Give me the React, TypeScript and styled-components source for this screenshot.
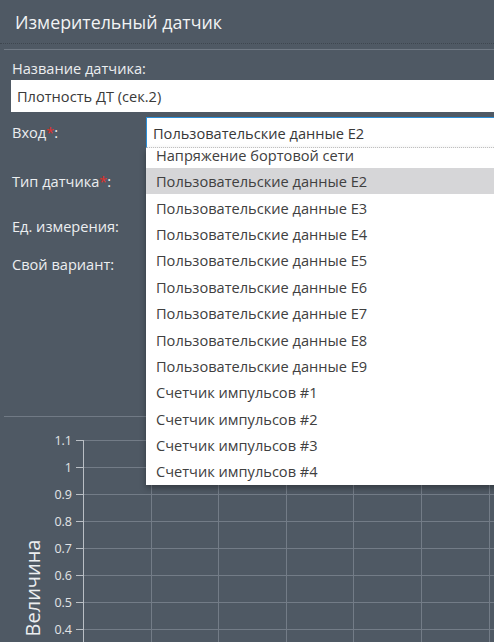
import React from "react";
import styled, { createGlobalStyle } from "styled-components";

const Global = createGlobalStyle`
  html, body { margin: 0; padding: 0; background: #4f5964; overflow: hidden; }
  body { font-family: "Open Sans", "Noto Sans", sans-serif; }
  * { box-sizing: border-box; }
`;

const Page = styled.div`
  width: 494px;
  height: 642px;
  overflow: hidden;
  background: #4f5964;
  color: #e8eaec;
`;

const Header = styled.div`
  height: 44px;
  padding-left: 15px;
  display: flex;
  align-items: center;
  font-size: 17.8px;
  color: #f2f3f4;
  border-bottom: 1px dotted #3e464f;
`;

const Divider = styled.div<{ $mt: number }>`
  margin: ${(p) => p.$mt}px 0 0 4px;
  height: 1px;
  background: #717a85;
`;

const Form = styled.div`
  padding-left: 11px;
`;

const Label = styled.div`
  font-size: 14.6px;
  line-height: 19px;
  color: #eceef0;
  padding-left: 1px;
  white-space: nowrap;
`;

const Required = styled.span`
  color: #e0302a;
`;

const NameLabel = styled(Label)`
  margin-top: 9px;
`;

const TextInput = styled.div`
  margin-top: 2px;
  height: 32px;
  background: #fff;
  color: #3a3a3a;
  font-size: 14.6px;
  display: flex;
  align-items: center;
  padding-left: 6px;
`;

const Rows = styled.div`
  margin-top: 5px;
  display: flex;
  flex-direction: column;
`;

const Row = styled.div<{ $h: number }>`
  height: ${(p) => p.$h}px;
  display: grid;
  grid-template-columns: 135px 1fr;
  align-items: center;
`;

const SelectWrap = styled.div`
  position: relative;
  height: 31px;
  align-self: start;
`;

const SelectBox = styled.div`
  height: 31px;
  width: 360px;
  background: #fff;
  border-top: 1px solid #2b8fd8;
  border-left: 1px solid #2b8fd8;
  border-bottom: 1px dotted #c9c9c9;
  color: #383838;
  font-size: 14.6px;
  display: flex;
  align-items: center;
  padding-left: 6px;
  white-space: nowrap;
`;

const Dropdown = styled.div`
  position: absolute;
  top: 31px;
  left: 0;
  width: 360px;
  height: 337px;
  background: #fff;
  overflow: hidden;
  box-shadow: 0 3px 6px rgba(0, 0, 0, 0.35);
  z-index: 5;
`;

const List = styled.div`
  margin-top: -6.4px;
`;

const Item = styled.div<{ $active?: boolean }>`
  height: 26.4px;
  display: flex;
  align-items: center;
  padding-left: 10px;
  font-size: 14.6px;
  color: #404040;
  white-space: nowrap;
  background: ${(p) => (p.$active ? "#d6d6d8" : "#fff")};
`;

const ChartBox = styled.div`
  margin-top: 0;
`;

const items = [
  "Напряжение бортовой сети",
  "Пользовательские данные E2",
  "Пользовательские данные E3",
  "Пользовательские данные E4",
  "Пользовательские данные E5",
  "Пользовательские данные E6",
  "Пользовательские данные E7",
  "Пользовательские данные E8",
  "Пользовательские данные E9",
  "Счетчик импульсов #1",
  "Счетчик импульсов #2",
  "Счетчик импульсов #3",
  "Счетчик импульсов #4",
];

const ticks = ["1.1", "1", "0.9", "0.8", "0.7", "0.6", "0.5", "0.4", "0.3"];

function Chart() {
  const top = 23;
  const step = 27;
  const axisX = 83;
  const vStep = 67.6;
  return (
    <svg width={494} height={230} style={{ display: "block" }}>
      {ticks.map((t, i) => {
        const y = top + i * step + 0.5;
        return (
          <g key={t}>
            <line x1={axisX} x2={494} y1={y} y2={y} stroke="#737c87" strokeWidth={1} />
            <line x1={76} x2={axisX} y1={y} y2={y} stroke="#b9bec4" strokeWidth={1} />
            <text
              x={72}
              y={y + 4.5}
              textAnchor="end"
              fontSize={12.5}
              fill="#e2e4e6"
              fontFamily="Open Sans, sans-serif"
            >
              {t}
            </text>
          </g>
        );
      })}
      {[1, 2, 3, 4, 5, 6].map((k) => {
        const x = Math.round(axisX + k * vStep) + 0.5;
        return <line key={k} x1={x} x2={x} y1={top} y2={230} stroke="#737c87" strokeWidth={1} />;
      })}
      <line x1={axisX + 0.5} x2={axisX + 0.5} y1={top} y2={230} stroke="#b9bec4" strokeWidth={1} />
      <text
        transform="translate(40 171) rotate(-90)"
        textAnchor="middle"
        fontSize={20}
        fill="#eceef0"
        fontFamily="Open Sans, sans-serif"
      >
        Величина
      </text>
    </svg>
  );
}

export default function App() {
  return (
    <>
      <Global />
      <Page>
        <Header>Измерительный датчик</Header>
        <Divider $mt={5} />
        <Form>
          <NameLabel>Название датчика:</NameLabel>
          <TextInput>Плотность ДТ (сек.2)</TextInput>
          <Rows>
            <Row $h={31}>
              <Label>
                Вход<Required>*</Required>:
              </Label>
              <SelectWrap>
                <SelectBox>Пользовательские данные E2</SelectBox>
                <Dropdown>
                  <List>
                    {items.map((it, i) => (
                      <Item key={it} $active={i === 1}>
                        {it}
                      </Item>
                    ))}
                  </List>
                </Dropdown>
              </SelectWrap>
            </Row>
            <Row $h={66}>
              <Label>
                Тип датчика<Required>*</Required>:
              </Label>
            </Row>
            <Row $h={24}>
              <Label>Ед. измерения:</Label>
            </Row>
            <Row $h={52}>
              <Label>Свой вариант:</Label>
            </Row>
          </Rows>
        </Form>
        <Divider $mt={126} />
        <ChartBox>
          <Chart />
        </ChartBox>
      </Page>
    </>
  );
}
